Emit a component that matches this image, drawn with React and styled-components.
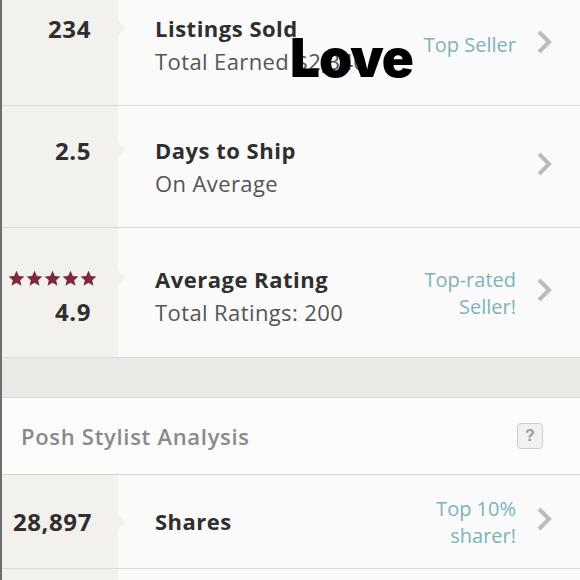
import React from "react";
import styled, { createGlobalStyle } from "styled-components";

const Global = createGlobalStyle`
  html, body { margin: 0; padding: 0; background: #fafafa; }
  body { font-family: "Open Sans", "Lato", sans-serif; overflow: hidden; }
`;

const Page = styled.div`
  position: relative;
  width: 580px;
  height: 580px;
  overflow: hidden;
  box-sizing: border-box;
  border-left: 2px solid #6e6e6e;
  background: #fafafa;
`;

const List = styled.div`
  margin-top: -16px;
  display: flex;
  flex-direction: column;
`;

const Row = styled.div`
  display: flex;
  align-items: stretch;
  height: ${(p) => p.$h}px;
  border-bottom: 1px solid #dcdbd9;
  box-sizing: border-box;
`;

const Side = styled.div`
  position: relative;
  width: 116px;
  flex: none;
  background: #f3f1ed;
  display: flex;
  flex-direction: column;
  justify-content: center;
  align-items: flex-end;
  padding-right: ${(p) => p.$pr ?? 27}px;
  box-sizing: border-box;
  padding-top: ${(p) => p.$pt ?? 0}px;
  &::after {
    content: "";
    position: absolute;
    right: -8px;
    top: ${(p) => p.$notch}px;
    border-top: 8px solid transparent;
    border-bottom: 8px solid transparent;
    border-left: 8px solid #f3f1ed;
  }
`;

const Num = styled.div`
  font-size: 24px;
  font-weight: 700;
  letter-spacing: 0.6px;
  color: #2f2f2f;
  line-height: 33px;
`;

const Stars = styled.div`
  display: flex;
  gap: 1px;
  height: 33px;
  align-items: center;
  margin-right: -6px;
`;

const Main = styled.div`
  flex: 1;
  display: flex;
  flex-direction: column;
  justify-content: center;
  padding-left: 37px;
  padding-top: ${(p) => p.$pt ?? 0}px;
  position: relative;
`;

const Title = styled.div`
  font-size: 22px;
  font-weight: 700;
  letter-spacing: 0.5px;
  color: #2f2f2f;
  line-height: 33px;
`;

const Sub = styled.div`
  font-size: 22px;
  font-weight: 400;
  letter-spacing: 0.4px;
  color: #555;
  line-height: 33px;
  white-space: nowrap;
`;

const Badge = styled.div`
  display: flex;
  align-items: center;
  text-align: right;
  font-size: 20px;
  line-height: 27px;
  color: #80b2b9;
`;

const Chev = styled.div`
  width: 64px;
  flex: none;
  display: flex;
  align-items: center;
  justify-content: flex-start;
  padding-left: 20px;
  box-sizing: border-box;
  padding-bottom: 6px;
`;

const Band = styled.div`
  height: 40px;
  background: #ebe9e5;
  border-bottom: 1px solid #d6d5d2;
  box-sizing: border-box;
`;

const Header = styled.div`
  height: 77px;
  display: flex;
  align-items: center;
  justify-content: space-between;
  padding: 0 37px 0 19px;
  border-bottom: 1px solid #d6d5d2;
  box-sizing: border-box;
  background: #fbfbfb;
`;

const HeaderText = styled.div`
  font-size: 22px;
  letter-spacing: 0.7px;
  color: #8a8a8a;
  font-weight: 600;
`;

const Help = styled.div`
  width: 24px;
  height: 24px;
  border: 1px solid #cfcfcf;
  border-radius: 4px;
  background: #f1f1f1;
  color: #9a9a9a;
  font-weight: 700;
  font-size: 16px;
  display: flex;
  align-items: center;
  justify-content: center;
  font-family: "Liberation Sans", sans-serif;
`;

const Love = styled.div`
  position: absolute;
  left: 288px;
  top: 32px;
  font-family: "Inter", sans-serif;
  font-weight: 900;
  font-size: 53px;
  letter-spacing: -1px;
  color: #000;
  line-height: 1;
`;

const Chevron = () => (
  <svg width="16" height="26" viewBox="0 0 16 26">
    <polyline points="3,3 13,13 3,23" fill="none" stroke="#bcbcbc" strokeWidth="4" />
  </svg>
);

const Star = () => (
  <svg width="17" height="17" viewBox="0 0 24 24">
    <path d="M12 1l3.3 7.3 7.9.7-6 5.3 1.8 7.8L12 18l-7 4.1 1.8-7.8-6-5.3 7.9-.7z" fill="#7a2a3b" />
  </svg>
);

export default function App() {
  return (
    <>
      <Global />
      <Page>
        <List>
          <Row $h={122}>
            <Side $notch={36}>
              <Num>234</Num>
              <div style={{ height: 33 }} />
            </Side>
            <Main>
              <Title>Listings Sold</Title>
              <Sub>Total Earned $2,340</Sub>
            </Main>
            <Badge>Top Seller</Badge>
            <Chev>
              <Chevron />
            </Chev>
          </Row>
          <Row $h={122}>
            <Side $notch={36}>
              <Num>2.5</Num>
              <div style={{ height: 33 }} />
            </Side>
            <Main>
              <Title>Days to Ship</Title>
              <Sub>On Average</Sub>
            </Main>
            <Chev>
              <Chevron />
            </Chev>
          </Row>
          <Row $h={130}>
            <Side $notch={42} $pt={4}>
              <Stars>
                <Star />
                <Star />
                <Star />
                <Star />
                <Star />
              </Stars>
              <Num>4.9</Num>
            </Side>
            <Main $pt={6}>
              <Title>Average Rating</Title>
              <Sub>Total Ratings: 200</Sub>
            </Main>
            <Badge>
              Top-rated
              <br />
              Seller!
            </Badge>
            <Chev>
              <Chevron />
            </Chev>
          </Row>
        </List>
        <Band />
        <Header>
          <HeaderText>Posh Stylist Analysis</HeaderText>
          <Help>?</Help>
        </Header>
        <Row $h={94}>
          <Side $notch={39} $pr={26}>
            <Num>28,897</Num>
          </Side>
          <Main>
            <Title>Shares</Title>
          </Main>
          <Badge>
            Top 10%
            <br />
            sharer!
          </Badge>
          <Chev>
            <Chevron />
          </Chev>
        </Row>
        <Row $h={40}>
          <Side $notch={60} />
        </Row>
        <Love>Love</Love>
      </Page>
    </>
  );
}
